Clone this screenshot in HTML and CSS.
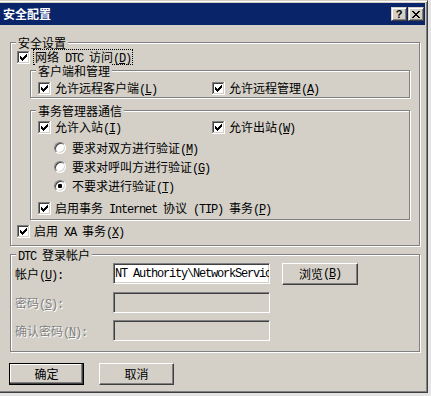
FILE: index.html
```html
<!DOCTYPE html>
<html>
    <head>
        <title>安全配置</title>
        <meta charset="utf-8">
        <link rel="stylesheet" href="styles.css">
    </head>
    <body>
        <svg class="defs" width="0" height="0">
            <symbol id="chk" viewBox="0 0 13 13">
                <path fill="#808080" d="M0 0h12v1h-11v11h-1z"/>
                <path fill="#404040" d="M1 1h10v1h-9v9h-1z"/>
                <path fill="#ffffff" d="M12 0h1v13h-13v-1h12z"/>
                <path fill="#d4d0c8" d="M11 1h1v11h-11v-1h10z"/>
                <path fill="#ffffff" d="M2 2h9v9h-9z"/>
                <path fill="#000000" d="M9 3h1v1h-1zM8 4h2v1h-2zM3 5h1v1h-1zM7 5h3v1h-3zM3 6h2v1h-2zM6 6h3v1h-3zM3 7h5v1h-5zM4 8h3v1h-3zM5 9h1v1h-1z"/>
            </symbol>
        </svg>
        <div class="dialog">
            <div class="titlebar">
                <span class="title">安全配置</span>
                <div class="caption-btns">
                    <span class="cap help">?</span>
                    <span class="cap">
                        <svg width="8" height="7" viewBox="0 0 8 7" shape-rendering="crispEdges"><path fill="#000" d="M0 0h2v1h-2zM6 0h2v1h-2zM1 1h2v1h-2zM5 1h2v1h-2zM2 2h4v1h-4zM3 3h2v1h-2zM2 4h4v1h-4zM1 5h2v1h-2zM5 5h2v1h-2zM0 6h2v1h-2zM6 6h2v1h-2z"/></svg>
                    </span>
                </div>
            </div>
            <div class="content">
                <div class="group outer">
                    <div class="legend">安全设置</div>
                    <div class="check top-check">
                        <svg class="box" width="13" height="13" shape-rendering="crispEdges"><use href="#chk"/></svg>
                        <span class="txt focus">网络<span class="m"> DTC </span>访问<span class="m">(<u>D</u>)</span></span>
                    </div>

                    <div class="group inner first">
                        <div class="legend">客户端和管理</div>
                        <div class="pair">
                            <div class="check">
                                <svg class="box" width="13" height="13" shape-rendering="crispEdges"><use href="#chk"/></svg>
                                <span class="txt">允许远程客户端<span class="m">(<u>L</u>)</span></span>
                            </div>
                            <div class="check">
                                <svg class="box" width="13" height="13" shape-rendering="crispEdges"><use href="#chk"/></svg>
                                <span class="txt">允许远程管理<span class="m">(<u>A</u>)</span></span>
                            </div>
                        </div>
                    </div>

                    <div class="group inner second">
                        <div class="legend">事务管理器通信</div>
                        <div class="pair">
                            <div class="check">
                                <svg class="box" width="13" height="13" shape-rendering="crispEdges"><use href="#chk"/></svg>
                                <span class="txt">允许入站<span class="m">(<u>I</u>)</span></span>
                            </div>
                            <div class="check">
                                <svg class="box" width="13" height="13" shape-rendering="crispEdges"><use href="#chk"/></svg>
                                <span class="txt">允许出站<span class="m">(<u>W</u>)</span></span>
                            </div>
                        </div>
                        <div class="option first-option">
                            <span class="radio"></span>
                            <span class="txt">要求对双方进行验证<span class="m">(<u>M</u>)</span></span>
                        </div>
                        <div class="option">
                            <span class="radio"></span>
                            <span class="txt">要求对呼叫方进行验证<span class="m">(<u>G</u>)</span></span>
                        </div>
                        <div class="option">
                            <span class="radio on"><span class="dot"></span></span>
                            <span class="txt">不要求进行验证<span class="m">(<u>T</u>)</span></span>
                        </div>
                        <div class="check tip">
                            <svg class="box" width="13" height="13" shape-rendering="crispEdges"><use href="#chk"/></svg>
                            <span class="txt">启用事务<span class="m"> Internet </span>协议<span class="m"> (TIP) </span>事务<span class="m">(<u>P</u>)</span></span>
                        </div>
                    </div>

                    <div class="check xa">
                        <svg class="box" width="13" height="13" shape-rendering="crispEdges"><use href="#chk"/></svg>
                        <span class="txt">启用<span class="m"> XA </span>事务<span class="m">(<u>X</u>)</span></span>
                    </div>
                </div>

                <div class="group dtc">
                    <div class="legend"><span class="m">DTC </span>登录帐户</div>
                    <div class="field account">
                        <span class="lbl">帐户<span class="m">(<u>U</u>):</span></span>
                        <div class="edit"><span class="m">NT Authority\NetworkService</span></div>
                        <button class="btn browse">浏览<span class="m">(<u>B</u>)</span></button>
                    </div>
                    <div class="field">
                        <span class="lbl disabled">密码<span class="m">(<u>S</u>):</span></span>
                        <div class="edit off"></div>
                    </div>
                    <div class="field">
                        <span class="lbl disabled">确认密码<span class="m">(<u>N</u>):</span></span>
                        <div class="edit off"></div>
                    </div>
                </div>

                <div class="actions">
                    <button class="btn default">确定</button>
                    <button class="btn">取消</button>
                </div>
            </div>
        </div>
    </body>
</html>
```

FILE: styles.css
```css
* {
    box-sizing: border-box;
}

body {
    margin: 0;
    background: #e4e4e4;
    font-family: "Noto Sans CJK SC", sans-serif;
    font-size: 12px;
    color: #000;
}

button {
    font: inherit;
    color: inherit;
    padding: 0;
}

.defs {
    position: absolute;
}

/* mono latin parts, like the system font's half-width glyphs */
.m {
    font-family: "Liberation Mono", monospace;
    font-size: 12px;
    letter-spacing: -1.2px;
    line-height: 0;
}

.dialog {
    width: 431px;
    height: 393px;
    margin-left: -3px;
    padding: 2px;
    display: flex;
    flex-direction: column;
    overflow: hidden;
    background: #d4d0c8;
    border: 1px solid;
    border-color: #d4d0c8 #404040 #404040 #d4d0c8;
    box-shadow: inset 1px 1px 0 #fff, inset -1px -1px 0 #808080;
}

.titlebar {
    height: 22px;
    flex: none;
    display: flex;
    align-items: center;
    padding-left: 3px;
    background: #0a246a;
}

.title {
    color: #fff;
    font-weight: bold;
    font-size: 12px;
    line-height: 14px;
}

.caption-btns {
    margin-left: auto;
    margin-right: 1px;
    display: flex;
    gap: 1px;
}

.cap {
    width: 16px;
    height: 14px;
    display: flex;
    align-items: center;
    justify-content: center;
    background: #d4d0c8;
    border: 1px solid;
    border-color: #d4d0c8 #404040 #404040 #d4d0c8;
    box-shadow: inset 1px 1px 0 #fff, inset -1px -1px 0 #808080;
}

.cap.help {
    font-family: "Liberation Sans", sans-serif;
    font-weight: bold;
    font-size: 11px;
    line-height: 11px;
}

.content {
    flex: none;
    display: flex;
    flex-direction: column;
    padding: 17px 0 0 10px;
}

.group {
    flex: none;
    display: flex;
    flex-direction: column;
    border: 1px solid #808080;
    box-shadow: inset 1px 1px 0 #fff, 1px 1px 0 #fff;
}

.legend {
    align-self: flex-start;
    height: 13px;
    margin: -7px 0 0 5px;
    padding: 0 2px;
    line-height: 13px;
    white-space: nowrap;
    background: #d4d0c8;
}

.outer {
    width: 410px;
    padding-bottom: 6px;
}

.inner {
    width: 380px;
    margin-left: 19px;
}

.inner.first {
    margin-top: 5px;
    padding-bottom: 1px;
}

.inner.second {
    margin-top: 12px;
    padding-bottom: 3px;
}

.check {
    height: 16px;
    flex: none;
    display: flex;
    align-items: center;
    gap: 4px;
}

.box {
    flex: none;
}

.txt {
    height: 14px;
    line-height: 14px;
    white-space: nowrap;
}

.focus {
    outline: 1px dotted #000;
    padding: 0 1px;
}

.top-check {
    margin-left: 6px;
}

.pair {
    display: flex;
    margin: 3px 0 0 7px;
}

.pair .check:first-child {
    width: 174px;
}

.second .pair {
    margin-top: 2px;
}

.option {
    height: 18px;
    flex: none;
    display: flex;
    align-items: center;
    gap: 6px;
    margin: 1px 0 0 23px;
}

.option.first-option {
    margin-top: 4px;
}

.radio {
    width: 12px;
    height: 12px;
    flex: none;
    display: flex;
    align-items: center;
    justify-content: center;
    border-radius: 50%;
    background: #fff;
    border: 1px solid;
    border-color: #808080 #fff #fff #808080;
    box-shadow: inset 1px 1px 0 #404040, inset -1px -1px 0 #d4d0c8;
}

.dot {
    width: 4px;
    height: 4px;
    border-radius: 1px;
    background: #000;
}

.check.tip {
    margin: 5px 0 0 7px;
}

.check.xa {
    margin: 3px 0 0 6px;
}

.dtc {
    width: 410px;
    margin-top: 8px;
    padding-bottom: 10px;
}

.field {
    height: 21px;
    flex: none;
    display: flex;
    align-items: flex-start;
    margin: 7px 0 0 4px;
}

.field.account {
    height: 22px;
    margin-top: 2px;
}

.lbl {
    width: 98px;
    height: 21px;
    line-height: 21px;
    white-space: nowrap;
}

.lbl.disabled {
    color: #808080;
    text-shadow: 1px 1px 0 #fff;
}

.edit {
    width: 157px;
    height: 21px;
    display: flex;
    align-items: center;
    padding-left: 1px;
    overflow: hidden;
    white-space: nowrap;
    background: #fff;
    border: 1px solid;
    border-color: #808080 #fff #fff #808080;
    box-shadow: inset 1px 1px 0 #404040, inset -1px -1px 0 #d4d0c8;
}

.edit .m {
    line-height: 14px;
}

.edit.off {
    background: #d4d0c8;
}

.btn {
    width: 75px;
    height: 22px;
    flex: none;
    display: flex;
    align-items: center;
    justify-content: center;
    background: #d4d0c8;
    border: 1px solid;
    border-color: #fff #404040 #404040 #fff;
    box-shadow: inset -1px -1px 0 #808080;
    line-height: 14px;
}

.btn.browse {
    width: 76px;
    margin-left: 12px;
}

.btn.default {
    border-color: #000;
    box-shadow: inset -1px -1px 0 #404040, inset -2px -2px 0 #808080, inset 1px 1px 0 #fff;
}

.actions {
    display: flex;
    gap: 15px;
    margin: 11px 0 0 -1px;
}
```
